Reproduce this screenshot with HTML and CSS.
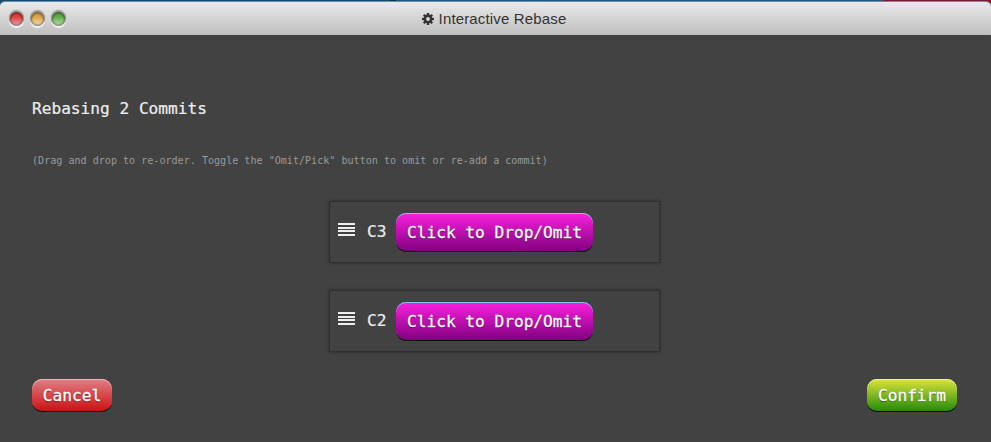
FILE: index.html
```html
<!DOCTYPE html>
<html lang="en">
<head>
<meta charset="utf-8">
<title>Interactive Rebase</title>
<link rel="stylesheet" href="styles.css">
</head>
<body>
<div class="window">
  <header class="titlebar">
    <div class="lights"><i class="light red"></i><i class="light amber"></i><i class="light green"></i></div>
    <div class="title">
      <svg class="gear" viewBox="0 0 12 12"><g fill="#333"><g id="teeth"><rect x="4.8" y="0" width="2.4" height="12"/><rect x="0" y="4.8" width="12" height="2.4"/></g><use href="#teeth" transform="rotate(45 6 6)"/><circle cx="6" cy="6" r="4.4"/></g><circle cx="6" cy="6" r="1.9" fill="#dcdada"/></svg>
      <span>Interactive Rebase</span>
    </div>
  </header>
  <main class="content">
    <h1>Rebasing 2 Commits</h1>
    <p class="hint">(Drag and drop to re-order. Toggle the "Omit/Pick" button to omit or re-add a commit)</p>
    <ul class="commits">
      <li class="commit"><svg class="grip" viewBox="0 0 17 13" shape-rendering="crispEdges"><path d="M0 0h17v2H0zM0 4h17v2H0zM0 7h17v2H0zM0 11h17v2H0z" fill="#eee"/></svg><span class="name">C3</span><button class="button toggle">Click to Drop/Omit</button></li>
      <li class="commit"><svg class="grip" viewBox="0 0 17 13" shape-rendering="crispEdges"><path d="M0 0h17v2H0zM0 4h17v2H0zM0 7h17v2H0zM0 11h17v2H0z" fill="#eee"/></svg><span class="name">C2</span><button class="button toggle">Click to Drop/Omit</button></li>
    </ul>
    <footer class="actions"><button class="button cancel">Cancel</button><button class="button confirm">Confirm</button></footer>
  </main>
</div>
</body>
</html>
```
FILE: styles.css
```css
* { box-sizing: border-box; }
body {
  margin: 0;
  height: 442px;
  padding-top: 1px;
  overflow: hidden;
  background: linear-gradient(90deg, #1d4a6b 0 390px, #173247 390px 396px, #28567a 396px 884px, #7a1838 884px);
  font-family: "DejaVu Sans Mono", monospace;
  font-size: 16.15px;
  color: #eee;
}
.window {
  height: 441px;
  background: #424242;
  border-top: 1px solid #5c8fbc;
  border-radius: 5px 5px 0 0;
  overflow: hidden;
}
.titlebar {
  height: 33px;
  position: relative;
  display: flex;
  justify-content: center;
  background: linear-gradient(#ebe9ea, #bfbfbf);
}
.lights {
  position: absolute;
  left: 9px;
  top: 9px;
  display: flex;
  gap: 6px;
}
.light {
  width: 15px;
  height: 15px;
  border-radius: 50%;
  border: 1px solid #858585;
  box-shadow: 0 2px 1px #f5f5f5, 0 -1px 1px #999, inset 0 2px 2px rgba(0, 0, 0, .3), inset 0 0 2px rgba(0, 0, 0, .6);
}
.red { background: linear-gradient(#dc4144 40%, #f6a0a0); }
.amber { background: linear-gradient(#dda44e 40%, #fbdda4); }
.green { background: linear-gradient(#61ad4d 40%, #b4e3a5); }
.title {
  display: flex;
  align-items: center;
  gap: 4px;
  padding-right: 2px;
  font: 15px "Liberation Sans", Arial, sans-serif;
  letter-spacing: .15px;
  color: #333;
}
.gear { width: 12px; height: 12px; margin-left: -1px; margin-right: 1px; }
.content { padding: 63px 34px 0 32px; }
h1 {
  margin: 0;
  font-size: 16.15px;
  font-weight: 400;
  line-height: 22px;
  -webkit-text-stroke: .2px;
}
.hint {
  margin: 33px 0 0;
  font-size: 10.09px;
  line-height: 16px;
  color: #999;
}
.commits {
  display: grid;
  gap: 27px;
  width: 331px;
  margin: 32px 0 0 297px;
  padding: 0;
  list-style: none;
}
.commit {
  display: flex;
  align-items: center;
  height: 62px;
  padding-left: 8px;
  border: 1px solid #303030;
  box-shadow: 0 0 3px #292929;
}
.grip {
  width: 17px;
  height: 13px;
  margin: -6px 12px 0 0;
}
.name {
  width: 29px;
  padding-bottom: 2px;
  -webkit-text-stroke: .2px;
}
.button {
  display: flex;
  align-items: center;
  justify-content: center;
  border: 0;
  border-radius: 10px;
  padding: 0;
  font: inherit;
  color: #fff;
  text-shadow: 0 1px 1px rgba(0, 0, 0, .6);
  -webkit-text-stroke: .3px;
}
.toggle {
  width: 197px;
  height: 38px;
  background: linear-gradient(#fb20df, #810080);
  box-shadow: inset 0 1px 0 #83c4ed, 0 1px 0 #000;
}
.actions {
  display: flex;
  justify-content: space-between;
  margin-top: 27px;
}
.cancel {
  width: 80px;
  height: 32px;
  background: linear-gradient(#e08088, #cc1111);
  box-shadow: inset 0 1px 0 #f4b5b9, 0 1px 0 #000;
}
.confirm {
  width: 90px;
  height: 32px;
  background: linear-gradient(#dce33b, #258b09);
  box-shadow: inset 0 1px 0 #f1f5a0, 0 1px 0 #000;
}
```
